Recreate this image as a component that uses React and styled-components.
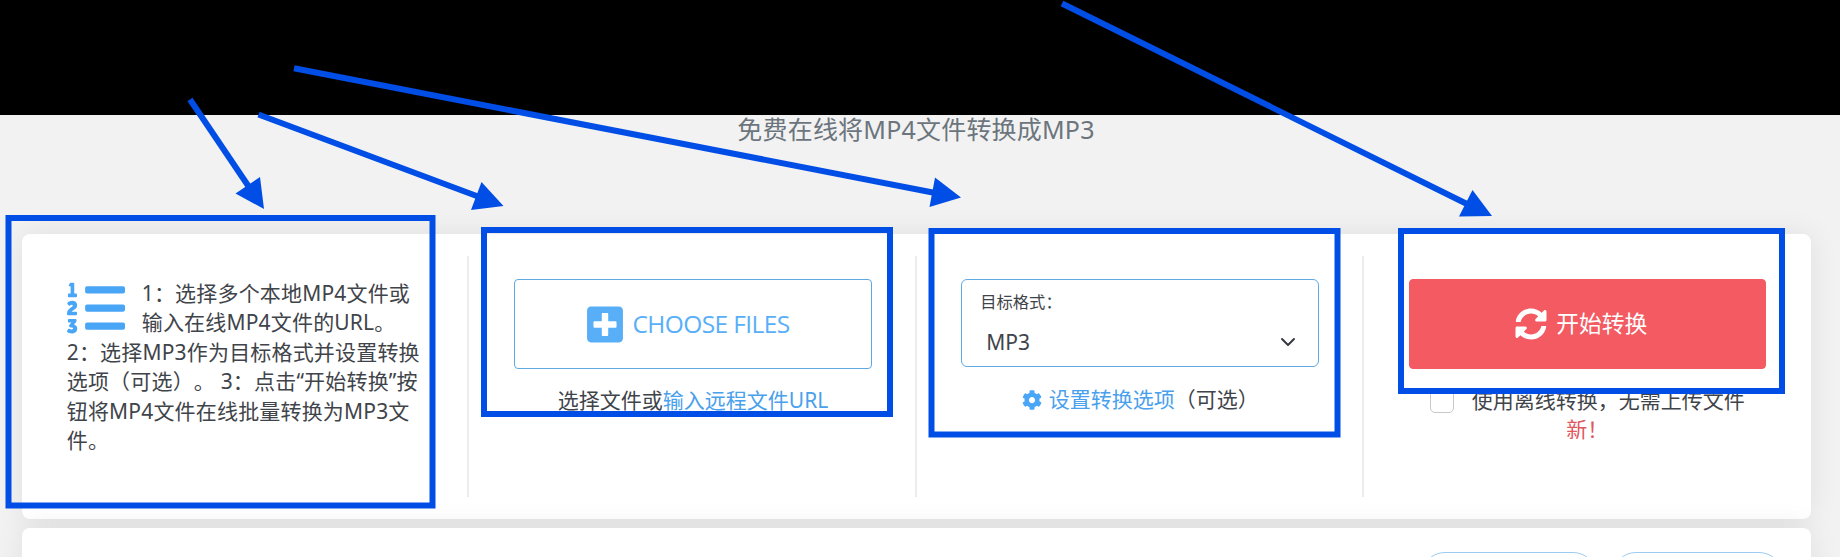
import React from "react";
import styled, { createGlobalStyle } from "styled-components";
import { FaListOl, FaPlusSquare, FaSyncAlt, FaCog } from "react-icons/fa";

const GlobalStyle = createGlobalStyle`
  * { box-sizing: border-box; }
  body {
    margin: 0;
    overflow: hidden;
    background: #f2f2f2;
    color: #3f444a;
    font: 21px/29.4px "Noto Sans", "Noto Sans CJK SC", sans-serif;
    text-spacing-trim: space-all;
  }
`;

const Page = styled.div`
  position: relative;
  height: 557px;
  overflow: hidden;
  display: flex;
  flex-direction: column;
`;

const Banner = styled.header`
  flex: none;
  height: 115px;
  background: #000;
`;

const Subtitle = styled.h2`
  flex: none;
  margin: 0;
  height: 119px;
  padding-right: 8px;
  text-align: center;
  font-size: 25px;
  font-weight: 400;
  line-height: 29px;
  color: #6c757d;
  letter-spacing: 0.2px;
`;

const Cards = styled.main`
  display: flex;
  flex-direction: column;
  gap: 9px;
  width: 1789px;
  margin-left: 22px;
`;

const Card = styled.section`
  display: flex;
  flex: none;
  height: 285px;
  padding: 22px 0;
  border-radius: 8px;
  background: #fff;
  box-shadow: 0 0 30px rgba(0, 0, 0, 0.08);
`;

const Footer = styled(Card)`
  justify-content: flex-end;
  gap: 15px;
  padding: 24px 28px 0 0;
`;

const Column = styled.div`
  flex: none;
  width: 25%;
  height: 241px;
  padding: 23px ${(p) => (p.$last ? "45px" : "42.5px")} 0 44.75px;
  border-right: ${(p) => (p.$last ? "0" : "2px solid #ececee")};
`;

const Intro = styled.div`
  display: flex;
  align-items: flex-start;
  gap: 17px;
`;

const ListIcon = styled(FaListOl)`
  flex: none;
  width: 58px;
  height: 58px;
  margin: 0 0 -10px;
  color: #49a5f5;
`;

const Line = styled.div`
  white-space: nowrap;
  letter-spacing: ${(p) => p.$spacing || "0.18px"};
`;

const ActionButton = styled.button`
  display: flex;
  align-items: center;
  justify-content: center;
  gap: ${(p) => p.$gap};
  width: 100%;
  height: 90px;
  padding: ${(p) => p.$padding};
  border: 1px solid ${(p) => (p.$filled ? "#f35a62" : "#5fa9e3")};
  border-radius: 4px;
  background: ${(p) => (p.$filled ? "#f35a62" : "#fff")};
  color: ${(p) => (p.$filled ? "#fff" : "#58aff8")};
  font: inherit;
  font-family: "Open Sans", "Noto Sans CJK SC", sans-serif;
  font-size: ${(p) => p.$size};
  letter-spacing: ${(p) => p.$spacing};
  white-space: nowrap;
`;

const PlusIcon = styled(FaPlusSquare)`
  width: 36px;
  height: 41px;
`;

const SyncIcon = styled(FaSyncAlt)`
  width: 32px;
  height: 32px;
`;

const Caption = styled.div`
  display: flex;
  justify-content: center;
  align-items: center;
  padding: ${(p) => p.$padding};
  white-space: nowrap;
`;

const Link = styled.a`
  color: #49a0ec;
`;

const CogIcon = styled(FaCog)`
  width: 20px;
  height: 20px;
  margin-right: 7px;
  color: #49a5f5;
`;

const SelectBox = styled.div`
  height: 88px;
  padding: 8px 22px 0 18px;
  border: 1px solid #5fa9e3;
  border-radius: 6px;
`;

const SelectLabel = styled.div`
  font-size: 16.3px;
  line-height: 28px;
`;

const SelectValue = styled.div`
  display: flex;
  justify-content: space-between;
  align-items: center;
  padding-left: 6px;
  margin-top: 11px;
  line-height: 30px;
`;

const Checkbox = styled.span`
  width: 24px;
  height: 24px;
  margin-right: 18px;
  border: 1px solid #c9c9cc;
  border-radius: 5px;
`;

const NewTag = styled.div`
  text-align: center;
  color: #e0575e;
`;

const Pill = styled.div`
  width: ${(p) => p.$width};
  height: 48px;
  border: 1px solid #9ccbf2;
  border-radius: 24px;
`;

const Annotations = styled.svg`
  position: absolute;
  top: 0;
  left: 0;
  pointer-events: none;
`;

const boxes = [
  [8.5, 218, 424, 287.5],
  [484, 230, 406, 184],
  [931.5, 231, 406, 203.5],
  [1401, 231, 381, 160],
];

const arrows = [
  { from: [190, 99.5], to: [249, 187], head: "264,209 235.5,193.5 260,177" },
  { from: [258.5, 114.5], to: [478, 196.5], head: "503.5,206 481.5,182 471,210" },
  { from: [294, 68.3], to: [934, 192.7], head: "961,197.5 935,177.5 929.5,207" },
  { from: [1062, 3.5], to: [1467, 204], head: "1492,216 1472.5,190 1459,216.5" },
];

export default function App() {
  return (
    <Page>
      <GlobalStyle />
      <Banner />
      <Subtitle>免费在线将MP4文件转换成MP3</Subtitle>
      <Cards>
        <Card>
          <Column>
            <Intro>
              <ListIcon />
              <div>
                <Line>1：选择多个本地MP4文件或</Line>
                <Line>输入在线MP4文件的URL。</Line>
              </div>
            </Intro>
            <Line>2：选择MP3作为目标格式并设置转换</Line>
            <Line>选项（可选）。 3：点击“开始转换”按</Line>
            <Line>钮将MP4文件在线批量转换为MP3文</Line>
            <Line>件。</Line>
          </Column>
          <Column>
            <ActionButton $size="24.5px" $gap="9px" $padding="0 9px 0 0" $spacing="-0.6px">
              <PlusIcon />
              CHOOSE FILES
            </ActionButton>
            <Caption $padding="17px 0 0">
              选择文件或<Link>输入远程文件URL</Link>
            </Caption>
          </Column>
          <Column>
            <SelectBox>
              <SelectLabel>目标格式：</SelectLabel>
              <SelectValue>
                MP3
                <svg width="16" height="16" viewBox="0 0 16 16" fill="none" stroke="#343a40" strokeWidth="2" strokeLinecap="round" strokeLinejoin="round">
                  <path d="m2 5 6 6 6-6" />
                </svg>
              </SelectValue>
            </SelectBox>
            <Caption $padding="18px 0 0">
              <CogIcon />
              <Link>设置转换选项</Link>（可选）
            </Caption>
          </Column>
          <Column $last>
            <ActionButton $filled $size="22.8px" $gap="9px" $padding="0 12px 0 0" $spacing="0">
              <SyncIcon />
              开始转换
            </ActionButton>
            <Caption $padding="17px 0 0">
              <Checkbox />
              使用离线转换，无需上传文件
            </Caption>
            <NewTag>新！</NewTag>
          </Column>
        </Card>
        <Footer>
          <Pill $width="176px" />
          <Pill $width="171px" />
        </Footer>
      </Cards>
      <Annotations width="1840" height="557" fill="none" stroke="#004ee6" strokeWidth="6">
        {boxes.map(([x, y, width, height]) => (
          <rect key={x} x={x} y={y} width={width} height={height} />
        ))}
        {arrows.map(({ from, to, head }) => (
          <g key={head}>
            <line x1={from[0]} y1={from[1]} x2={to[0]} y2={to[1]} />
            <polygon points={head} fill="#004ee6" stroke="none" />
          </g>
        ))}
      </Annotations>
    </Page>
  );
}
